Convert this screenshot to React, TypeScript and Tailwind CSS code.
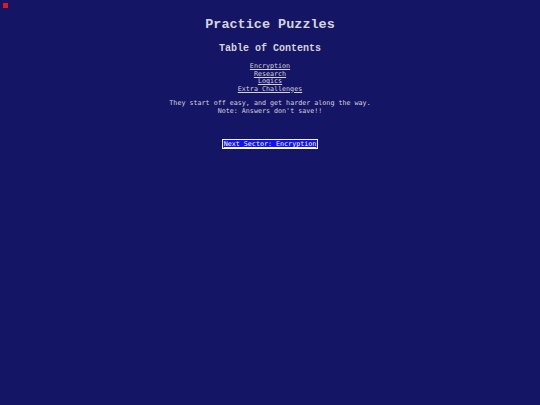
const links = ['Encryption', 'Research', 'Logics', 'Extra Challenges'];

export default function App() {
  return (
    <div className="relative min-h-[405px] w-full bg-[#151565] text-[#d4d4dc] text-center">
      <div className="absolute left-[3px] top-[3px] h-[5px] w-[5px] bg-[#e01818]" />
      <h1 className="pt-[16px] font-['Liberation_Mono',monospace] text-[13.5px] font-bold leading-[18px]">
        Practice Puzzles
      </h1>
      <h2 className="mt-[8px] font-['Liberation_Mono',monospace] text-[10px] font-bold leading-[14px]">
        Table of Contents
      </h2>
      <div className="mt-[7px] flex flex-col items-center font-['DejaVu_Sans_Mono',monospace] text-[6.7px] leading-[7.5px]">
        {links.map((l) => (
          <a key={l} href="#" className="underline">
            {l}
          </a>
        ))}
      </div>
      <p className="mt-[7px] font-['DejaVu_Sans_Mono',monospace] text-[6.7px] leading-[7.5px]">
        They start off easy, and get harder along the way.
        <br />
        Note: Answers don't save!!
      </p>
      <div className="mt-[24px] flex justify-center">
        <button className="border border-white bg-[#1010ff] px-[1px] font-['DejaVu_Sans_Mono',monospace] text-[6.7px] leading-[8px] text-white underline">
          Next Sector: Encryption
        </button>
      </div>
    </div>
  );
}
